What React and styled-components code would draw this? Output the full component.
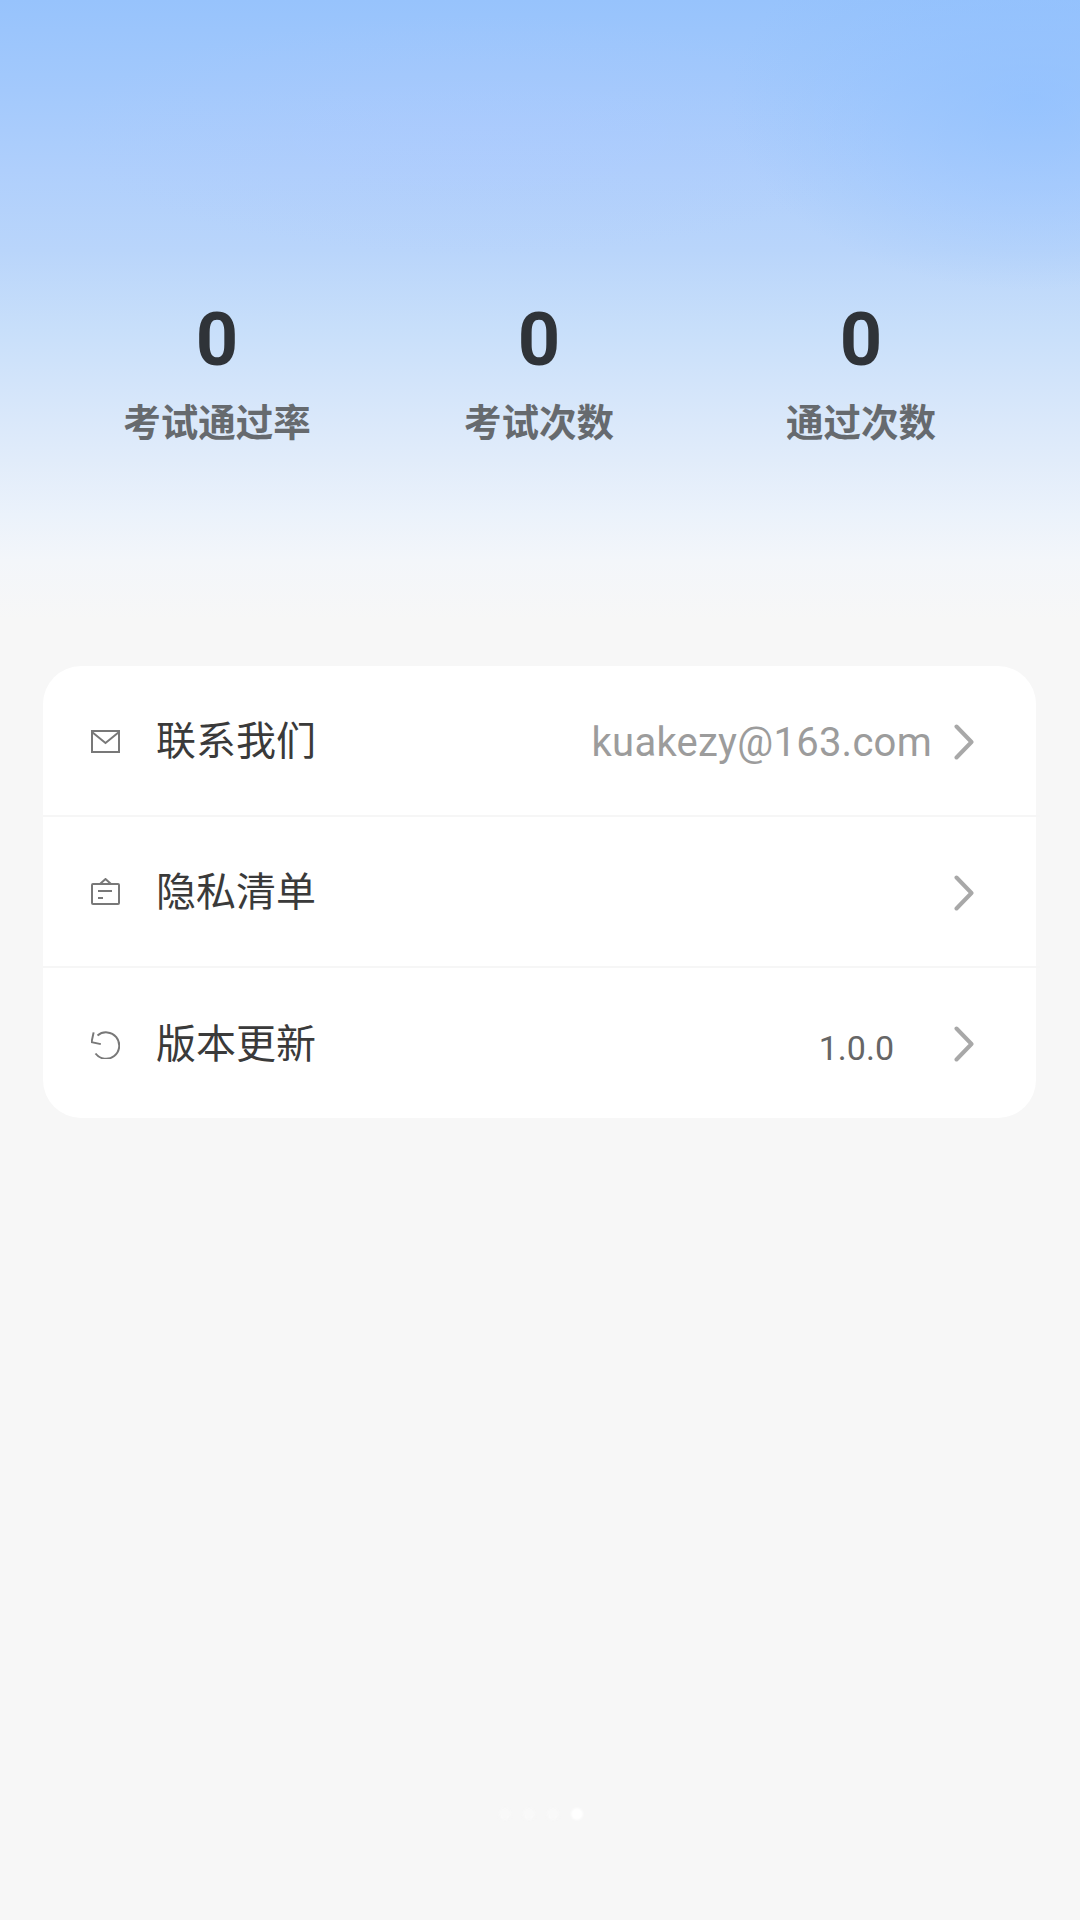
import React from 'react';
import styled, { createGlobalStyle } from 'styled-components';

const GlobalStyle = createGlobalStyle`
  html, body {
    margin: 0;
    padding: 0;
    background: #f7f7f7;
  }
  * {
    box-sizing: border-box;
  }
`;

const Page = styled.div`
  width: 1080px;
  height: 1920px;
  display: flex;
  flex-direction: column;
  overflow: hidden;
  font-family: Roboto, "Noto Sans CJK SC", sans-serif;
  background:
    radial-gradient(ellipse 300px 190px at 1030px 100px, rgba(140, 190, 255, 0.6), rgba(140, 190, 255, 0) 100%),
    radial-gradient(ellipse 420px 120px at 480px 135px, rgba(175, 200, 255, 0.3), rgba(175, 200, 255, 0) 100%),
    linear-gradient(180deg, #97c3fc 0, #a3c9fc 90px, #afcffc 170px, #b9d5fb 250px, #c8dffa 330px, #d6e6fa 400px, #e1ecfa 460px, #ebf2fb 515px, #f3f6fa 560px, #f7f7f7 620px);
`;

const Stats = styled.section`
  height: 666px;
  padding: 304px 58px 0 56px;
  display: grid;
  grid-template-columns: repeat(3, 322px);
  align-content: start;
`;

const Stat = styled.div`
  display: flex;
  flex-direction: column;
  align-items: center;
`;

const StatValue = styled.div`
  font-size: 74px;
  line-height: 72px;
  font-weight: 700;
  color: #2f3338;
`;

const StatLabel = styled.div`
  margin-top: 22px;
  font-size: 37.5px;
  line-height: 50px;
  font-weight: 700;
  color: #666a6e;
`;

const Card = styled.section`
  width: 993px;
  margin-left: 43px;
  background: #fff;
  border-radius: 38px;
`;

const Row = styled.div`
  height: ${(p) => (p.$last ? '150px' : '151px')};
  margin-right: ${(p) => (p.$last ? '0' : '-4px')};
  padding: 0 ${(p) => (p.$last ? '62px' : '66px')} 0 48px;
  display: flex;
  align-items: center;
  border-bottom: ${(p) => (p.$last ? 'none' : '2px solid #f6f6f6')};
`;

const IconBox = styled.span`
  width: 29px;
  height: 29px;
  margin-right: 36px;
  margin-top: 2px;
  display: flex;
  color: #787878;
  svg {
    display: block;
  }
`;

const Title = styled.span`
  flex: 1;
  font-size: 40px;
  line-height: 50px;
  color: #3a3a3a;
  font-weight: 400;
  margin-top: 3px;
`;

const Email = styled.span`
  font-size: 40px;
  line-height: 50px;
  letter-spacing: 0.25px;
  color: #9c9c9c;
  margin-right: 22px;
  margin-top: 5px;
`;

const Version = styled.span`
  font-size: 34px;
  line-height: 50px;
  color: #666;
  margin-right: 60px;
  margin-top: 9px;
`;

const Chevron = styled.svg`
  width: 20px;
  height: 36px;
  flex: none;
  margin-top: 2px;
  color: #a8a8a8;
`;

const Dots = styled.div`
  margin-top: 690px;
  display: flex;
  justify-content: center;
  gap: 12px;
  padding-left: 2px;
`;

const Dot = styled.span`
  width: 12px;
  height: 12px;
  border-radius: 50%;
  filter: blur(1px);
  background: ${(p) => (p.$active ? '#ffffff' : '#f9f9f9')};
`;

const MailIcon = () => (
  <svg width="29" height="29" viewBox="0 0 29 29" fill="none" stroke="currentColor" strokeWidth="2">
    <rect x="1" y="4" width="27" height="21" />
    <path d="M1 5l13.5 11L28 5" />
  </svg>
);

const BagIcon = () => (
  <svg width="29" height="29" viewBox="0 0 29 29" fill="none" stroke="currentColor" strokeWidth="2">
    <rect x="1" y="6" width="27" height="20" rx="1" />
    <path d="M9 6l5.5-5L20 6" />
    <path d="M7 13h14" />
    <path d="M7 20h5" />
  </svg>
);

const RefreshIcon = () => (
  <svg width="29" height="29" viewBox="0 0 29 29" fill="none" stroke="currentColor" strokeWidth="2">
    <path d="M6.5 5.5A13.2 13.2 0 1 1 4.5 23.5" />
    <path d="M1.5 3v10h9.5" strokeLinejoin="miter" transform="rotate(12 5 8)" />
  </svg>
);

const ArrowRight = () => (
  <Chevron viewBox="0 0 20 36" fill="none" stroke="currentColor" strokeWidth="4" strokeLinecap="round" strokeLinejoin="round">
    <path d="M2.5 2.5L17.5 18 2.5 33.5" />
  </Chevron>
);

const stats = [
  { label: '考试通过率', value: 0 },
  { label: '考试次数', value: 0 },
  { label: '通过次数', value: 0 },
];

export default function App() {
  return (
    <Page>
      <GlobalStyle />
      <Stats>
        {stats.map((item) => (
          <Stat key={item.label}>
            <StatValue>{item.value}</StatValue>
            <StatLabel>{item.label}</StatLabel>
          </Stat>
        ))}
      </Stats>
      <Card>
        <Row>
          <IconBox><MailIcon /></IconBox>
          <Title>联系我们</Title>
          <Email>kuakezy@163.com</Email>
          <ArrowRight />
        </Row>
        <Row>
          <IconBox><BagIcon /></IconBox>
          <Title>隐私清单</Title>
          <ArrowRight />
        </Row>
        <Row $last>
          <IconBox><RefreshIcon /></IconBox>
          <Title>版本更新</Title>
          <Version>1.0.0</Version>
          <ArrowRight />
        </Row>
      </Card>
      <Dots>
        <Dot />
        <Dot />
        <Dot />
        <Dot $active />
      </Dots>
    </Page>
  );
}
